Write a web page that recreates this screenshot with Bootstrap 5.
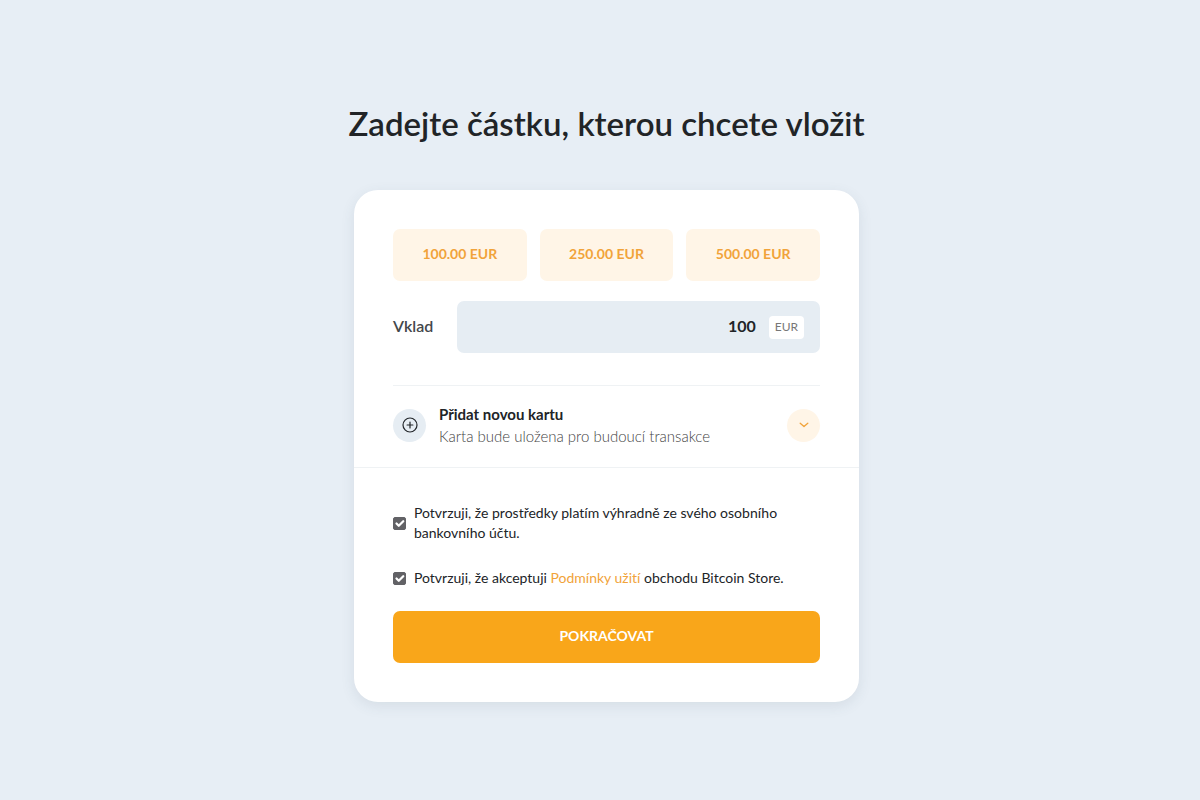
<!DOCTYPE html>
<html lang="cs">
<head>
<meta charset="utf-8">
<meta name="viewport" content="width=device-width, initial-scale=1">
<title>Vklad</title>
<link href="https://cdn.jsdelivr.net/npm/bootstrap@5.3.0/dist/css/bootstrap.min.css" rel="stylesheet">
<style>
  :root { --ink: #212427; --mist: #e6edf3; --cream: #fff5e7; --orange: #f9a61a; --amber: #f1a33a; }
  body { font-family: Lato, "Noto Sans", sans-serif; font-variant-ligatures: none; background: #e7eef5; color: var(--ink); }
  .page { padding: 99px 0 48px 13px; }
  .page-title { font-size: 33px; line-height: 48px; font-weight: 600; margin-bottom: 43px; }
  .deposit { max-width: 505px; border: 0; border-radius: 24px; box-shadow: 0 4px 14px rgba(60, 75, 100, .1); }
  .pane { padding: 39px; }
  .pane-top { padding-bottom: 0; }
  .pane-bottom { padding-top: 35px; border-top: 1px solid #eff2f4; }
  .amounts { gap: 13px; margin-bottom: 20px; }
  .btn-tall { height: 52px; border: 0; border-radius: 7px; font-size: 14px; font-weight: 700; padding: 4px 12px 8px; }
  .btn-amount, .btn-amount:hover { background: var(--cream); color: var(--amber); }
  .btn-main, .btn-main:hover { background: var(--orange); color: #fff; }
  .amount-row { gap: 24px; margin-bottom: 32px; }
  .amount-row label { font-size: 16px; font-weight: 600; color: #43474b; padding-bottom: 3px; }
  .amount-field { height: 52px; border-radius: 7px; background: var(--mist); padding-right: 16px; gap: 13px; }
  .amount-field input { background: transparent; font-size: 16px; font-weight: 700; padding: 0 0 3px; color: var(--ink); }
  .amount-field input:focus { background: transparent; box-shadow: none; }
  .currency { background: #fff; color: #777; font-size: 12px; line-height: 21px; padding: 0 6px 2px; border-radius: 4px; }
  .new-card { gap: 13px; border-top: 1px solid #eff2f4; padding: 17px 0 20px; }
  .new-card h2 { font-size: 15px; line-height: 22px; font-weight: 700; margin: 0; }
  .new-card p { font-size: 15px; line-height: 22px; font-weight: 300; color: #444; margin: 0; }
  .round { width: 33px; height: 33px; background: var(--mist); }
  .round-cream { background: var(--cream); color: var(--amber); }
  .consents { gap: 25px; margin-bottom: 23px; font-size: 14px; line-height: 20px; }
  .consents .form-check-input { width: 13px; height: 13px; border-radius: 2px; }
  .consents .form-check-input:checked { background-color: #626266; border-color: #626266; background-size: 15px; }
  .consents a { color: var(--amber); }
</style>
</head>
<body>
<main class="page d-flex flex-column align-items-center">
  <h1 class="page-title text-center">Zadejte částku, kterou chcete vložit</h1>
  <form class="card deposit w-100">
    <div class="pane pane-top">
      <div class="amounts d-flex">
        <button type="button" class="btn btn-tall btn-amount flex-fill">100.00 EUR</button>
        <button type="button" class="btn btn-tall btn-amount flex-fill">250.00 EUR</button>
        <button type="button" class="btn btn-tall btn-amount flex-fill">500.00 EUR</button>
      </div>
      <div class="amount-row d-flex align-items-center">
        <label for="amount">Vklad</label>
        <div class="amount-field d-flex align-items-center flex-grow-1">
          <input type="text" id="amount" class="form-control border-0 text-end" inputmode="decimal" value="100">
          <span class="currency">EUR</span>
        </div>
      </div>
      <section class="new-card d-flex align-items-center">
        <span class="round rounded-circle d-flex align-items-center justify-content-center flex-shrink-0">
          <svg width="16" height="16" viewBox="0 0 16 16" fill="none" stroke="#212529" stroke-width="1.2" stroke-linecap="round" aria-hidden="true"><circle cx="8" cy="8" r="7"/><path d="M8 5.1v5.8M5.1 8h5.8"/></svg>
        </span>
        <div class="flex-grow-1">
          <h2>Přidat novou kartu</h2>
          <p>Karta bude uložena pro budoucí transakce</p>
        </div>
        <button type="button" class="btn round round-cream rounded-circle border-0 p-0 d-flex align-items-center justify-content-center flex-shrink-0" aria-label="Rozbalit">
          <svg width="10" height="6" viewBox="0 0 10 6" fill="none" stroke="currentColor" stroke-width="1.3" stroke-linecap="round" stroke-linejoin="round" aria-hidden="true"><path d="M1.2 1.2 5 4.6l3.8-3.4"/></svg>
        </button>
      </section>
    </div>
    <div class="pane pane-bottom">
      <div class="consents d-flex flex-column">
        <div class="d-flex align-items-center gap-2">
          <input class="form-check-input m-0 flex-shrink-0" type="checkbox" id="own" checked>
          <label for="own">Potvrzuji, že prostředky platím výhradně ze svého osobního bankovního účtu.</label>
        </div>
        <div class="d-flex align-items-center gap-2">
          <input class="form-check-input m-0 flex-shrink-0" type="checkbox" id="terms" checked>
          <label for="terms">Potvrzuji, že akceptuji <a href="#" class="text-decoration-none">Podmínky užití</a> obchodu Bitcoin Store.</label>
        </div>
      </div>
      <button type="submit" class="btn btn-tall btn-main w-100">POKRAČOVAT</button>
    </div>
  </form>
</main>
<script src="https://cdn.jsdelivr.net/npm/bootstrap@5.3.0/dist/js/bootstrap.bundle.min.js"></script>
</body>
</html>
